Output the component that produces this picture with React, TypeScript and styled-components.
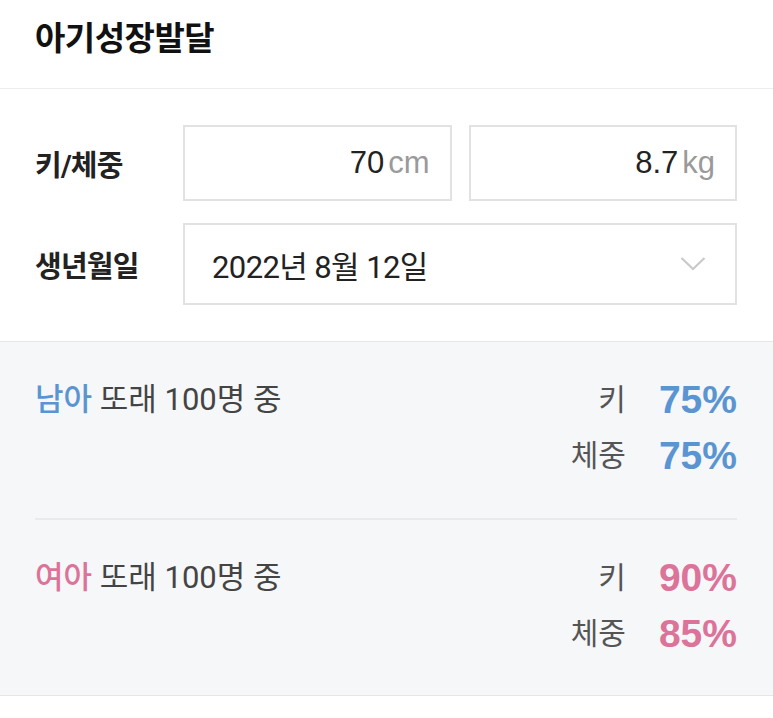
import styled, { createGlobalStyle } from "styled-components";

const GlobalStyle = createGlobalStyle`
  * {
    box-sizing: border-box;
  }
  body {
    margin: 0;
    background: #ffffff;
    font-family: Roboto, "Noto Sans CJK KR", sans-serif;
    color: #222;
  }
`;

type Group = {
  gender: string;
  color: string;
  height: number;
  weight: number;
};

const groups: Group[] = [
  { gender: "남아", color: "#5b95d1", height: 75, weight: 75 },
  { gender: "여아", color: "#dc7399", height: 90, weight: 85 },
];

const App = () => {
  return (
    <Page>
      <GlobalStyle />
      <Header>
        <Title>아기성장발달</Title>
      </Header>
      <Form>
        <FormRow>
          <Label>키/체중</Label>
          <Fields>
            <Field>
              <Value>70</Value>
              <Unit>cm</Unit>
            </Field>
            <Field>
              <Value>8.7</Value>
              <Unit>kg</Unit>
            </Field>
          </Fields>
        </FormRow>
        <FormRow>
          <Label>생년월일</Label>
          <Select>
            <SelectText>2022년 8월 12일</SelectText>
            <Chevron width="26" height="16" viewBox="0 0 26 16">
              <path
                d="M1.5 2 L13 13 L24.5 2"
                fill="none"
                stroke="#c9c9c9"
                strokeWidth="2.2"
              />
            </Chevron>
          </Select>
        </FormRow>
      </Form>
      <Stats>
        {groups.map((g, i) => (
          <StatGroup key={g.gender} last={i === groups.length - 1}>
            <Caption>
              <Gender color={g.color}>{g.gender}</Gender> 또래 100명 중
            </Caption>
            <Results>
              <ResultLabel>키</ResultLabel>
              <Percent color={g.color}>{g.height}%</Percent>
              <ResultLabel>체중</ResultLabel>
              <Percent color={g.color}>{g.weight}%</Percent>
            </Results>
          </StatGroup>
        ))}
      </Stats>
    </Page>
  );
};

const Page = styled.div`
  width: 773px;
  min-height: 718px;
  background: #fff;
`;

const Header = styled.header`
  height: 89px;
  padding: 0 35px 16px;
  display: flex;
  align-items: center;
  border-bottom: 1px solid #ececec;
`;

const Title = styled.h1`
  margin: 0;
  font-size: 33px;
  font-weight: 700;
  color: #111;
  letter-spacing: -0.5px;
`;

const Form = styled.section`
  padding: 36px 36px 36px 35px;
  display: flex;
  flex-direction: column;
  gap: 22px;
  border-bottom: 1px solid #e6e6e6;
`;

const FormRow = styled.div`
  display: flex;
  align-items: center;
`;

const Label = styled.div`
  width: 148px;
  flex-shrink: 0;
  font-size: 29px;
  font-weight: 700;
  color: #222;
  letter-spacing: -0.8px;
`;

const Fields = styled.div`
  flex: 1;
  display: grid;
  grid-template-columns: 1fr 1fr;
  gap: 17px;
`;

const Field = styled.div`
  height: 76px;
  border: 2px solid #e2e2e2;
  display: flex;
  align-items: center;
  justify-content: flex-end;
  padding-right: 20px;
  gap: 4px;
  font-family: "Liberation Sans", "Noto Sans CJK KR", sans-serif;
  font-size: 31px;
`;

const Value = styled.span`
  color: #222;
`;

const Unit = styled.span`
  color: #9a9a9a;
`;

const Select = styled.div`
  flex: 1;
  height: 82px;
  border: 2px solid #e2e2e2;
  display: flex;
  align-items: center;
  justify-content: space-between;
  padding: 0 29px 0 27px;
`;

const SelectText = styled.span`
  font-size: 31px;
  color: #222;
  letter-spacing: -0.6px;
`;

const Chevron = styled.svg`
  display: block;
`;

const Stats = styled.section`
  background: #f6f7f9;
  padding: 0 36px 0 35px;
  border-bottom: 1px solid #e6e6e6;
`;

const StatGroup = styled.div<{ last: boolean }>`
  display: flex;
  justify-content: space-between;
  align-items: flex-start;
  padding: 30px 0 ${(p) => (p.last ? "33px" : "34px")};
  border-bottom: ${(p) => (p.last ? "none" : "2px solid #e9eaec")};
`;

const Caption = styled.div`
  font-size: 31px;
  line-height: 56px;
  color: #444;
  letter-spacing: 0;
`;

const Gender = styled.span<{ color: string }>`
  color: ${(p) => p.color};
  font-weight: 500;
`;

const Results = styled.div`
  display: grid;
  grid-template-columns: auto auto;
  column-gap: 33px;
  align-items: center;
`;

const ResultLabel = styled.span`
  font-size: 30px;
  line-height: 56px;
  color: #555;
  text-align: right;
`;

const Percent = styled.span<{ color: string }>`
  font-family: "Liberation Sans", sans-serif;
  font-size: 39px;
  line-height: 56px;
  font-weight: 700;
  color: ${(p) => p.color};
  text-align: right;
`;

export default App;
